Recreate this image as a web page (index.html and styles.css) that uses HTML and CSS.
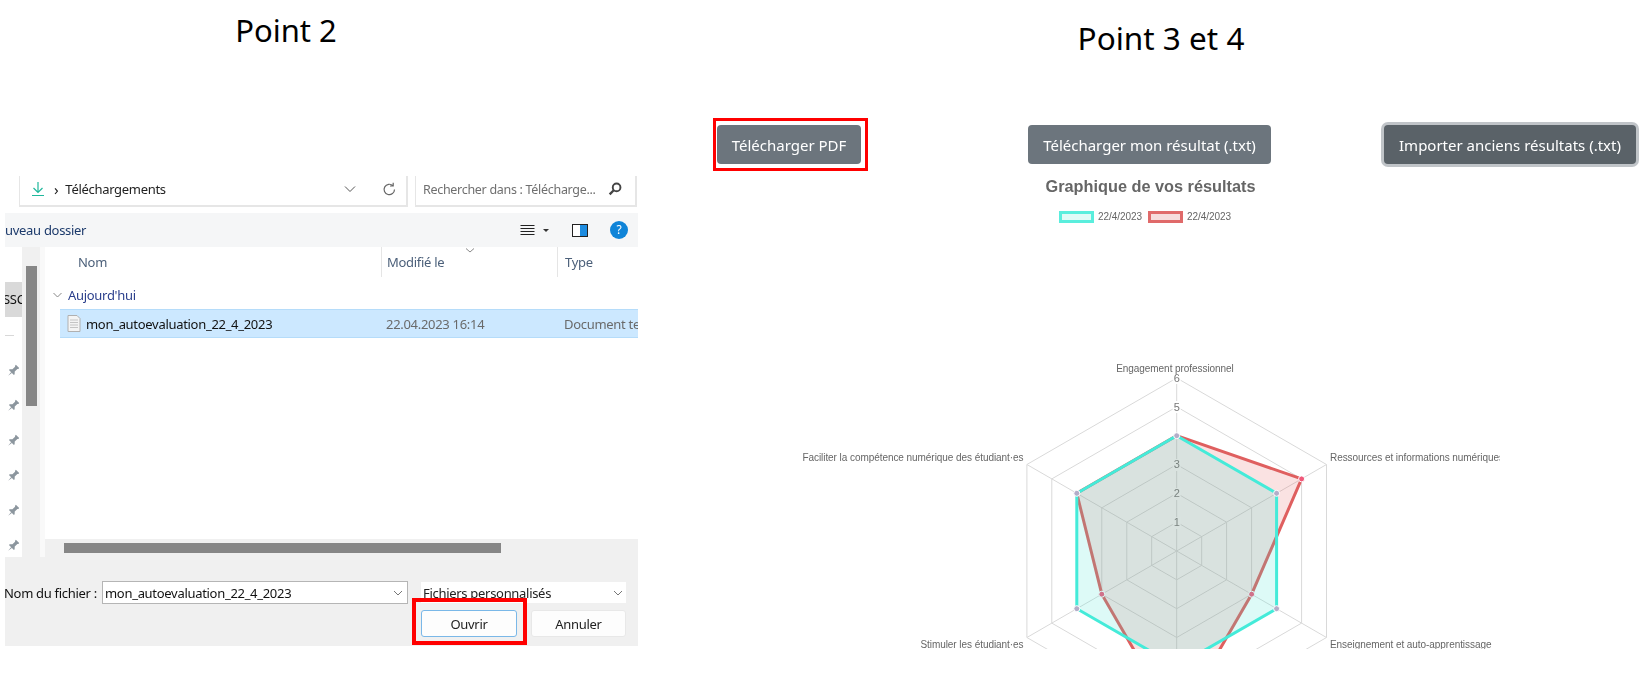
FILE: index.html
```html
<!DOCTYPE html>
<html>
    <head>
        <meta charset="utf-8">
        <title>Point 2, Point 3 et 4</title>
        <link rel="stylesheet" href="styles.css">
    </head>
    <body>
        <div class="page">
            <!-- Point 2 : boite de dialogue -->
            <section class="left">
                <h2 class="left-title">Point 2</h2>
                <div class="dialog">
                    <div class="addr-row">
                        <div class="addr-box">
                            <svg class="ico-down" width="16" height="16" viewBox="0 0 16 16"><path d="M8 1v10M3.500 7L8 11.500 12.500 7M2 14.500h12"/></svg>
                            <span class="crumb-sep">&rsaquo;</span>
                            <span class="crumb">Téléchargements</span>
                            <svg class="ico-chev" width="12" height="8" viewBox="0 0 12 8"><path d="M1 1.500l5 5 5-5"/></svg>
                            <svg class="ico-refresh" width="15" height="15" viewBox="0 0 15 15"><path d="M12.500 7.500a5.200 5.200 0 1 1-1.600-3.800M11.200 0.800v3.200H8"/></svg>
                        </div>
                        <div class="search-box">
                            <span>Rechercher dans : Télécharge...</span>
                            <svg width="16" height="16" viewBox="0 0 15 15"><circle class="lens" cx="9" cy="6" r="3.600"/><path class="lens-bar" d="M6.300 8.700L2.500 12.500"/></svg>
                        </div>
                    </div>
                    <div class="toolbar">
                        <span class="new-folder">uveau dossier</span>
                        <svg class="ico-list" width="15" height="12" viewBox="0 0 14 12"><path d="M0 1.500h14M0 4.500h14M0 7.500h14M0 10.500h14"/></svg>
                        <span class="list-arrow"></span>
                        <span class="pane-toggle"><span></span></span>
                        <span class="help">?</span>
                    </div>
                    <div class="main">
                        <div class="nav">
                            <div class="nav-item">SSC</div>
                            <div class="nav-dash"></div>
                            <svg class="pin" width="14" height="14" viewBox="0 0 12 12"><path transform="rotate(45 6 6)" d="M4 .5h4v1l-.6.6v3.200l1.600 1.700v.9H3v-.9l1.600-1.700V2.100L4 1.500zM5.500 7.900h1l-.5 4z"/></svg>
                            <svg class="pin" width="14" height="14" viewBox="0 0 12 12"><path transform="rotate(45 6 6)" d="M4 .5h4v1l-.6.6v3.200l1.600 1.700v.9H3v-.9l1.600-1.700V2.100L4 1.500zM5.500 7.900h1l-.5 4z"/></svg>
                            <svg class="pin" width="14" height="14" viewBox="0 0 12 12"><path transform="rotate(45 6 6)" d="M4 .5h4v1l-.6.6v3.200l1.600 1.700v.9H3v-.9l1.600-1.700V2.100L4 1.500zM5.500 7.900h1l-.5 4z"/></svg>
                            <svg class="pin" width="14" height="14" viewBox="0 0 12 12"><path transform="rotate(45 6 6)" d="M4 .5h4v1l-.6.6v3.200l1.600 1.700v.9H3v-.9l1.600-1.700V2.100L4 1.500zM5.500 7.900h1l-.5 4z"/></svg>
                            <svg class="pin" width="14" height="14" viewBox="0 0 12 12"><path transform="rotate(45 6 6)" d="M4 .5h4v1l-.6.6v3.200l1.600 1.700v.9H3v-.9l1.600-1.700V2.100L4 1.500zM5.500 7.900h1l-.5 4z"/></svg>
                            <svg class="pin" width="14" height="14" viewBox="0 0 12 12"><path transform="rotate(45 6 6)" d="M4 .5h4v1l-.6.6v3.200l1.600 1.700v.9H3v-.9l1.600-1.700V2.100L4 1.500zM5.500 7.900h1l-.5 4z"/></svg>
                        </div>
                        <div class="vscroll"><div class="vthumb"></div></div>
                        <div class="files">
                            <div class="col-head">
                                <span class="col col-name">Nom</span>
                                <span class="col col-date">Modifié le<svg class="sort" width="10" height="5" viewBox="0 0 10 5"><path d="M1 0.500l4 3.500 4-3.500"/></svg></span>
                                <span class="col col-type">Type</span>
                            </div>
                            <div class="group">
                                <svg width="9" height="6" viewBox="0 0 9 6"><path d="M0.500 1l4 4 4-4"/></svg>
                                <span>Aujourd'hui</span>
                            </div>
                            <div class="file-row">
                                <span class="file-name">
                                    <svg width="14" height="17" viewBox="0 0 14 17"><path class="doc" d="M1 .5h9l3 3v13H1z"/><path class="doc-lines" d="M3 5h8M3 7.500h8M3 10h8M3 12.500h8"/></svg>
                                    mon_autoevaluation_22_4_2023
                                </span>
                                <span class="file-date">22.04.2023 16:14</span>
                                <span class="file-type">Document te</span>
                            </div>
                            <div class="files-space"></div>
                            <div class="hscroll"><div class="hthumb"></div></div>
                        </div>
                    </div>
                    <div class="footer">
                        <div class="name-row">
                            <span class="name-label">Nom du fichier :</span>
                            <div class="name-input">
                                <span>mon_autoevaluation_22_4_2023</span>
                                <svg class="ico-small-chev" width="10" height="6" viewBox="0 0 10 6"><path d="M1 1l4 4 4-4"/></svg>
                            </div>
                            <div class="type-select">
                                <span>Fichiers personnalisés</span>
                                <svg class="ico-small-chev" width="10" height="6" viewBox="0 0 10 6"><path d="M1 1l4 4 4-4"/></svg>
                            </div>
                        </div>
                        <div class="btn-row">
                            <button class="win-btn win-btn-main">Ouvrir</button>
                            <button class="win-btn">Annuler</button>
                        </div>
                    </div>
                    <div class="mark mark-open"></div>
                </div>
            </section>

            <!-- Point 3 et 4 : resultats -->
            <section class="right">
                <h2 class="right-title">Point 3 et 4</h2>
                <div class="actions">
                    <div class="pdf-wrap">
                        <button class="btn">Télécharger PDF</button>
                        <div class="mark mark-pdf"></div>
                    </div>
                    <button class="btn btn-txt">Télécharger mon résultat (.txt)</button>
                    <button class="btn btn-import">Importer anciens résultats (.txt)</button>
                </div>
                <div class="chart-title">Graphique de vos résultats</div>
                <div class="legend">
                    <span class="swatch swatch-teal"></span><span class="legend-label">22/4/2023</span>
                    <span class="swatch swatch-red"></span><span class="legend-label">22/4/2023</span>
                </div>
                <svg class="radar" width="710" height="294" viewBox="790 355 710 294">
                    <g transform="translate(1176.7 551)">
                        <g class="grid">
                            <polygon points="0,-28.8 25,-14.4 25,14.4 0,28.8 -25,14.4 -25,-14.4"/>
                            <polygon points="0,-57.7 49.9,-28.8 49.9,28.8 0,57.7 -49.9,28.8 -49.9,-28.8"/>
                            <polygon points="0,-86.5 74.9,-43.2 74.9,43.2 0,86.5 -74.9,43.2 -74.9,-43.2"/>
                            <polygon points="0,-115.3 99.9,-57.700 99.9,57.700 0,115.3 -99.9,57.700 -99.9,-57.700"/>
                            <polygon points="0,-144.2 124.9,-72.1 124.9,72.1 0,144.2 -124.9,72.1 -124.9,-72.1"/>
                            <polygon points="0,-173 149.8,-86.5 149.8,86.5 0,173 -149.8,86.5 -149.800,-86.5"/>
                            <path d="M0 0V-173M0 0L149.8 -86.5M0 0L149.8 86.5M0 0V173M0 0L-149.8 86.5M0 0L-149.8 -86.5"/>
                        </g>
                        <g class="ticks">
                            <rect x="-4" y="-179" width="8" height="12"/><text y="-169.500">6</text>
                            <rect x="-4" y="-150" width="8" height="12"/><text y="-140.500">5</text>
                            <rect x="-4" y="-92" width="8" height="12"/><text y="-83">3</text>
                            <rect x="-4" y="-63" width="8" height="12"/><text y="-54">2</text>
                            <rect x="-4" y="-34" width="8" height="12"/><text y="-25">1</text>
                        </g>
                        <polygon class="set-red" points="0,-115.3 124.9,-72.1 74.9,43.2 0,173 -74.9,43.2 -99.9,-57.7"/>
                        <g class="dots-red">
                            <circle cx="124.9" cy="-72.1" r="3"/>
                            <circle cx="74.9" cy="43.2" r="3"/>
                            <circle cx="-74.9" cy="43.2" r="3"/>
                        </g>
                        <polygon class="set-teal" points="0,-115.3 99.9,-57.7 99.9,57.7 0,115.3 -99.9,57.7 -99.9,-57.7"/>
                        <g class="dots-teal">
                            <circle cx="0" cy="-115.3" r="3"/>
                            <circle cx="99.9" cy="-57.7" r="3"/>
                            <circle cx="99.9" cy="57.7" r="3"/>
                            <circle cx="-99.9" cy="57.7" r="3"/>
                            <circle cx="-99.9" cy="-57.7" r="3"/>
                        </g>
                    </g>
                    <g class="axis-labels">
                        <text class="mid" x="1175" y="372">Engagement professionnel</text>
                        <text class="end" x="1023.500" y="461">Faciliter la compétence numérique des étudiant·es</text>
                        <text class="end" x="1023.500" y="648">Stimuler les étudiant·es</text>
                        <text x="1330" y="461">Ressources et informations numériques</text>
                        <text x="1330" y="648">Enseignement et auto-apprentissage</text>
                    </g>
                </svg>
            </section>
        </div>
    </body>
</html>
```

FILE: styles.css
```css
*{
    margin: 0;
    padding: 0;
    box-sizing: border-box;
}
body{
    background-color: #fff;
    font-family: "Noto Sans", "Open Sans", sans-serif;
}
.page{
    display: flex;
    width: 1651px;
    height: 686px;
    overflow: hidden;
}
.left{
    width: 650px;
    flex: none;
}
.right{
    flex: 1;
}
.left-title,
.right-title{
    height: 62px;
    line-height: 62px;
    font-size: 31.5px;
    font-weight: normal;
    color: #000;
    text-align: center;
}
.left-title{
    height: 60px;
    line-height: 60px;
    padding-right: 78px;
    font-size: 31px;
}
.right-title{
    margin-top: 7px;
    padding-left: 21px;
}

/* dialog */
.dialog{
    position: relative;
    width: 633px;
    height: 470px;
    margin: 116px 0 0 5px;
    display: flex;
    flex-direction: column;
    background-color: #fff;
    font-size: 13px;
    letter-spacing: -.3px;
    color: #222;
    filter: blur(.4px);
}
.addr-row{
    display: flex;
    height: 37px;
    padding: 0 1px 6px 14px;
    gap: 7px;
}
.addr-box{
    width: 389px;
    display: flex;
    align-items: center;
    padding: 0 0 3px 10px;
    border: 1px solid #e6e6e6;
    border-top: 0;
    border-width: 0 2px 2px 1px;
}
.search-box{
    flex: 1;
    display: flex;
    align-items: center;
    justify-content: space-between;
    padding: 0 12px 3px 7px;
    border: 1px solid #e6e6e6;
    border-top: 0;
    border-width: 0 2px 2px 1px;
    color: #6f6f6f;
    font-size: 12.5px;
}
.ico-down{
    fill: none;
    stroke: #1fb89c;
    stroke-width: 1.2;
}
.crumb-sep{
    margin-left: 8px;
    font-size: 15px;
    line-height: 15px;
}
.crumb{
    margin-left: 7px;
}
.ico-chev{
    margin-left: auto;
    fill: none;
    stroke: #555;
}
.ico-refresh{
    margin: 0 9px 0 26px;
    fill: none;
    stroke: #666;
    stroke-width: 1.2;
}
.lens{
    fill: none;
    stroke: #444;
    stroke-width: 1.8;
}
.lens-bar{
    stroke: #444;
    stroke-width: 2.2;
}
.toolbar{
    height: 34px;
    display: flex;
    align-items: center;
    background-color: #f5f6f7;
    padding-right: 10px;
}
.new-folder{
    color: #1c3a6b;
    margin-right: auto;
}
.ico-list{
    stroke: #222;
    stroke-width: 1;
}
.list-arrow{
    margin-left: 8px;
    border: 3px solid transparent;
    border-top-color: #333;
    border-bottom: 0;
}
.pane-toggle{
    width: 16px;
    height: 13px;
    margin-left: 23px;
    border: 1px solid #222;
    background-color: #fff;
    display: flex;
    justify-content: flex-end;
}
.pane-toggle span{
    width: 7px;
    background-color: #1d8ce0;
}
.help{
    width: 18px;
    height: 18px;
    margin-left: 22px;
    border-radius: 50%;
    background-color: #0f84d8;
    color: #fff;
    font-size: 12px;
    line-height: 18px;
    text-align: center;
}
.main{
    flex: none;
    height: 310px;
    display: flex;
    overflow: hidden;
}
.nav{
    width: 17px;
    flex: none;
    display: flex;
    flex-direction: column;
    align-items: flex-start;
}
.nav-item{
    width: 17px;
    height: 35px;
    margin-top: 35px;
    overflow: hidden;
    flex: none;
    background-color: #d9d9d9;
    line-height: 35px;
    text-indent: -2px;
    white-space: nowrap;
    color: #111;
}
.nav-dash{
    width: 9px;
    height: 1px;
    flex: none;
    margin-top: 18px;
    background-color: #d8d8d8;
}
.pin{
    flex: none;
    margin: 21px 0 0 1px;
    fill: #8c969e;
}
.nav-dash + .pin{
    margin-top: 28px;
}
.vscroll{
    width: 18px;
    flex: none;
    padding: 19px 3px 0 4px;
    background-color: #f0f0f0;
}
.vthumb{
    height: 140px;
    background-color: #868686;
}
.files{
    flex: 1;
    min-width: 0;
    display: flex;
    flex-direction: column;
    border-left: 5px solid #f9f9f9;
    overflow: hidden;
}
.col-head{
    height: 29px;
    flex: none;
    display: grid;
    grid-template-columns: 336px 176px 1fr;
    color: #4c607a;
}
.col{
    padding-top: 1px;
    line-height: 29px;
    position: relative;
}
.col-name{
    padding-left: 33px;
}
.col-date,
.col-type{
    border-left: 1px solid #e5e5e5;
    padding-left: 5px;
}
.col-type{
    padding-left: 7px;
}
.sort{
    position: absolute;
    left: 83px;
    top: 1px;
    fill: none;
    stroke: #8a8a8a;
}
.group{
    height: 33px;
    flex: none;
    display: flex;
    align-items: center;
    gap: 6px;
    padding: 4px 0 0 8px;
    color: #2b3f8c;
}
.group svg{
    fill: none;
    stroke: #888;
}
.file-row{
    height: 29px;
    flex: none;
    margin-left: 15px;
    display: grid;
    grid-template-columns: 326px 178px 1fr;
    align-items: center;
    background-color: #cce8ff;
    border-top: 1px solid #b5dcfa;
    border-bottom: 1px solid #b5dcfa;
    white-space: nowrap;
}
.file-name{
    display: flex;
    align-items: center;
    gap: 5px;
    padding-left: 7px;
    color: #111;
}
.doc{
    fill: #f4f4f4;
    stroke: #b0b0b0;
}
.doc-lines{
    stroke: #c4c4c4;
}
.file-date,
.file-type{
    color: #6a6a6a;
}
.files-space{
    flex: 1;
}
.hscroll{
    height: 18px;
    flex: none;
    padding: 4px 0 0 19px;
    background-color: #f0f0f0;
}
.hthumb{
    width: 437px;
    height: 10px;
    background-color: #868686;
}
.footer{
    flex: 1;
    background-color: #f0f0f0;
    padding: 24px 12px 0 0;
}
.name-row{
    display: flex;
    align-items: center;
    height: 23px;
}
.name-label{
    width: 97px;
    flex: none;
    overflow: hidden;
    white-space: nowrap;
    text-indent: -1px;
    color: #111;
}
.name-input{
    width: 306px;
    height: 23px;
    flex: none;
    display: flex;
    align-items: center;
    justify-content: space-between;
    padding: 0 4px 0 2px;
    background-color: #fff;
    border: 1px solid #b5b5b5;
    color: #111;
}
.type-select{
    flex: 1;
    height: 21px;
    margin-left: 13px;
    display: flex;
    align-items: center;
    justify-content: space-between;
    padding: 1px 3px 0 2px;
    background-color: #fff;
    color: #222;
}
.ico-small-chev{
    fill: none;
    stroke: #777;
}
.btn-row{
    display: flex;
    justify-content: flex-end;
    gap: 14px;
    margin-top: 6px;
}
.win-btn{
    width: 95px;
    height: 27px;
    background-color: #fdfdfd;
    border: 1px solid #e8e8e8;
    border-radius: 3px;
    font: inherit;
    letter-spacing: inherit;
    color: #222;
}
.win-btn-main{
    width: 96px;
    border-color: #7ab8e8;
}

/* cadres rouges */
.mark{
    position: absolute;
    border: 3px solid #f00;
    pointer-events: none;
}
.mark-open{
    left: 407px;
    top: 422px;
    width: 115px;
    height: 47px;
    border-width: 4px;
}
.mark-pdf{
    top: -7px;
    left: -4px;
    right: -7px;
    bottom: -7px;
}

/* resultats */
.actions{
    display: flex;
    margin-top: 56px;
    filter: blur(.4px);
}
.pdf-wrap{
    position: relative;
    margin-left: 67px;
}
.btn{
    display: block;
    height: 39px;
    padding: 0 14px;
    border: 0;
    border-radius: 4px;
    background-color: #6c757d;
    color: #fff;
    font-family: "Noto Sans", "Open Sans", sans-serif;
    font-size: 15px;
    white-space: nowrap;
}
.pdf-wrap .btn{
    width: 144px;
}
.btn-txt{
    width: 243px;
    margin-left: 167px;
}
.btn-import{
    width: 252px;
    margin-left: 113px;
    background-color: #5a6268;
    box-shadow: 0 0 0 3px rgba(130, 138, 145, .5);
}
.chart-title{
    height: 22px;
    margin-top: 11px;
    line-height: 22px;
    font-family: "Liberation Sans", sans-serif;
    font-size: 16.3px;
    font-weight: bold;
    color: #666;
    text-align: center;
    filter: blur(.3px);
}
.legend{
    display: flex;
    align-items: center;
    height: 11px;
    margin: 14px 0 0 409px;
    font-family: "Liberation Sans", sans-serif;
    font-size: 10px;
    letter-spacing: -.05px;
    color: #666;
    filter: blur(.3px);
}
.swatch{
    width: 35px;
    height: 12px;
    flex: none;
    border: 3px solid;
}
.swatch-teal{
    border-color: #5aeedd;
    background-color: #e0fbf7;
}
.swatch-red{
    border-color: #e06a6a;
    background-color: #f6dcdc;
    margin-left: 6px;
}
.legend-label{
    margin-left: 4px;
}
.radar{
    display: block;
    margin: 133px 0 0 140px;
    font-family: "Liberation Sans", sans-serif;
    font-size: 10px;
    letter-spacing: -.06px;
    fill: #666;
    filter: blur(.4px);
}
.grid polygon,
.grid path{
    fill: none;
    stroke: #d9d9d9;
    stroke-width: 1;
}
.ticks rect{
    fill: #fff;
}
.ticks text{
    text-anchor: middle;
    font-size: 11px;
    fill: #777;
}
.set-red{
    fill: rgba(220, 60, 60, .15);
    stroke: #df5f5f;
    stroke-width: 3;
}
.dots-red circle{
    fill: #f0597a;
    stroke: #fff;
}
.set-teal{
    fill: rgba(64, 228, 212, .18);
    stroke: #44ebd9;
    stroke-width: 3;
}
.dots-teal circle{
    fill: #b3adc8;
    stroke: #fff;
}
.mid{
    text-anchor: middle;
}
.end{
    text-anchor: end;
}
```
